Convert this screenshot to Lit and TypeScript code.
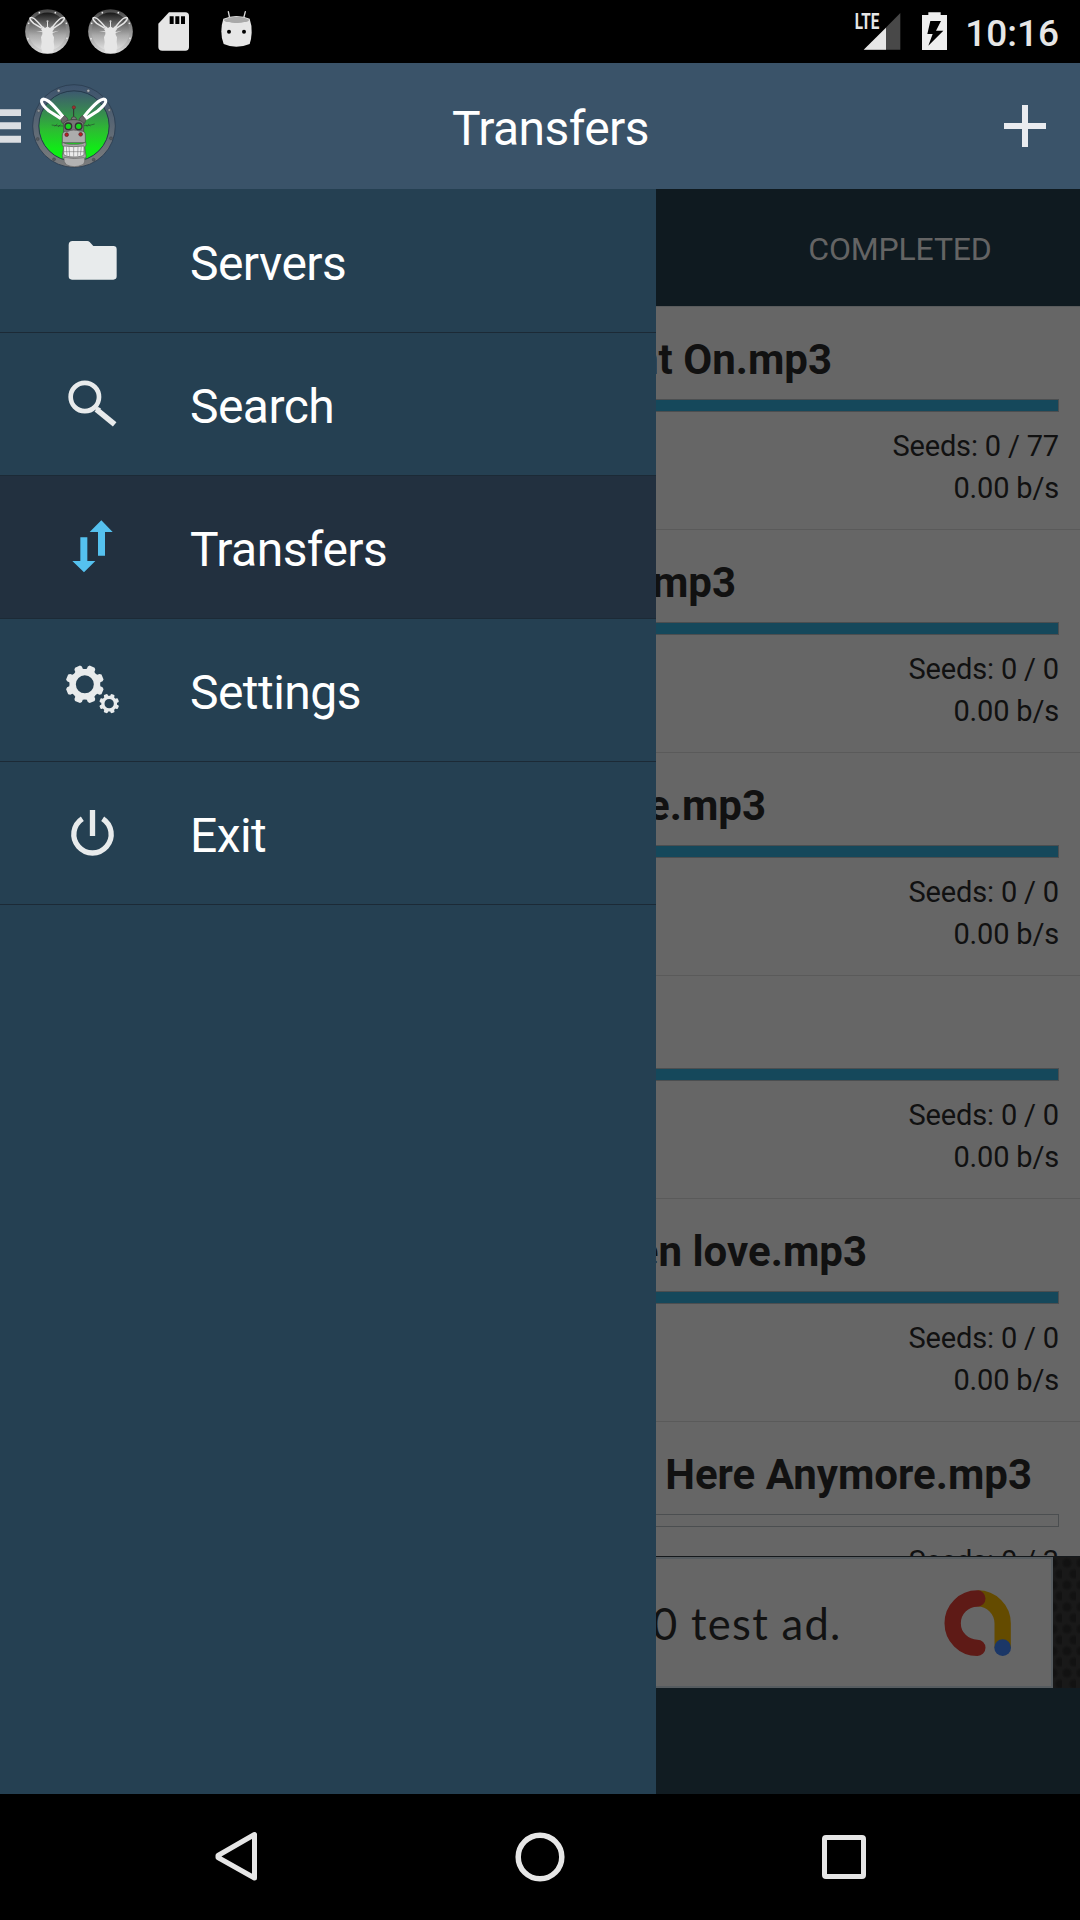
import { LitElement, html, css, svg } from "lit";
import { customElement } from "lit/decorators.js";

interface Transfer {
  title: string;
  inset: number;
  done: boolean;
  seeds: string;
}

const TRANSFERS: Transfer[] = [
  { title: "nt On.mp3", inset: 248, done: true, seeds: "0 / 77" },
  { title: ".mp3", inset: 344, done: true, seeds: "0 / 0" },
  { title: "e.mp3", inset: 314, done: true, seeds: "0 / 0" },
  { title: "", inset: 21, done: true, seeds: "0 / 0" },
  { title: "en love.mp3", inset: 213, done: true, seeds: "0 / 0" },
  { title: "Here Anymore.mp3", inset: 48, done: false, seeds: "0 / 3" },
];

/** Outline of an eight-toothed gear with a round hole (even-odd fill). */
function gear(cx: number, cy: number, outer: number, root: number, hole: number): string {
  const pt = (r: number, deg: number) => {
    const a = (deg * Math.PI) / 180;
    return `${(cx + r * Math.cos(a)).toFixed(1)} ${(cy + r * Math.sin(a)).toFixed(1)}`;
  };
  const parts: string[] = [];
  for (let k = 0; k < 8; k++) {
    const c = 22.5 + k * 45;
    parts.push(
      `${k ? "L" : "M"}${pt(root, c - 15)}L${pt(outer * 0.93, c - 13)}L${pt(outer, c - 8)}` +
        `L${pt(outer, c + 8)}L${pt(outer * 0.93, c + 13)}L${pt(root, c + 15)}` +
        `Q${pt(root * 0.96, c + 22.5)} ${pt(root, c + 30)}`,
    );
  }
  return `${parts.join("")}ZM${cx - hole} ${cy}a${hole} ${hole} 0 1 0 ${hole * 2} 0a${hole} ${hole} 0 1 0 ${-hole * 2} 0Z`;
}

const MENU = [
  {
    label: "Servers",
    box: "150 0 240 426",
    icon: svg`<path fill="#e8ebec" d="M218 153H262Q266 153 269 156L280 168H340Q350 168 350 178V259Q350 269 340 269H216Q206 269 206 259V165Q206 153 218 153Z"/>`,
  },
  {
    label: "Search",
    box: "150 429 240 426",
    icon: svg`<g fill="none" stroke="#e8ebec"><circle cx="254.500" cy="621" r="42.500" stroke-width="14"/><path stroke-width="17" d="M289 658L344 703"/></g><path fill="#e8ebec" d="M284 655L293 651L303 655L292 668Z"/>`,
  },
  {
    label: "Transfers",
    box: "150 18 240 426",
    icon: svg`<path fill="#55c1ef" d="M304 151L338 186H315V257H294V186H269ZM241 202H262V273H286L252 307L217 273H241Z"/>`,
  },
  {
    label: "Settings",
    box: "150 447 240 426",
    icon: svg`<path fill="#e8ebec" fill-rule="evenodd" d=${gear(254.5, 643, 58, 47, 27) + gear(327.5, 701, 30, 24, 14)}/>`,
  },
  {
    label: "Exit",
    box: "150 876 240 426",
    icon: svg`<g fill="none" stroke="#e8ebec" stroke-width="16"><path d="M247 1046A56 56 0 1 0 308 1046"/><path d="M277.500 1020V1098"/></g>`,
  },
];

const BOLTS = [[176, 272], [265, 272], [116, 332], [328, 330], [113, 417], [333, 415], [162, 478], [281, 479]];

const donkey = html`<svg class="logo" viewBox="96 252 252 252">
  <defs>
    <linearGradient id="rim" x1="0" y1="0" x2="0" y2="1"><stop offset="0" stop-color="#3c536c"/><stop offset=".3" stop-color="#4d5e70"/><stop offset="1" stop-color="#7d7d7d"/></linearGradient>
    <linearGradient id="glow" x1="0" y1="0" x2="0" y2="1"><stop offset="0" stop-color="#3d5870"/><stop offset=".28" stop-color="#388553"/><stop offset=".55" stop-color="#2dbb32"/><stop offset=".82" stop-color="#12e918"/><stop offset="1" stop-color="#08f40e"/></linearGradient>
  </defs>
  <circle cx="222" cy="378" r="124" fill="url(#rim)" stroke="#2a3c4f" stroke-width="2.500"/>
  <circle cx="222" cy="378" r="105.500" fill="url(#glow)" stroke="#24394a" stroke-width="3"/>
  ${BOLTS.map(([x, y]) => svg`<circle cx=${x} cy=${y} r="4.500" fill=${y < 300 ? "#b5b8bb" : y < 400 ? "#929599" : "#565a5d"} stroke="#3c444c" stroke-width="1.500"/>`)}
  <path d="M183 356L147 333Q121 311 125 301Q130 293 146 304Q162 317 189 350ZM257 356L293 333Q321 309 317 301Q312 293 296 304Q278 318 252 350Z" fill="none" stroke="#fff" stroke-width="9.500" stroke-linejoin="round"/>
  <path d="M182 359L194 346L204 357L197 370H187ZM258 359L247 346L237 357L244 370H254Z" fill="#666" stroke="#444" stroke-width="2"/>
  <path d="M221 350V324" stroke="#303030" stroke-width="3"/>
  <circle cx="221.500" cy="322" r="5" fill="#9c3030" stroke="#5b2424" stroke-width="1.500"/>
  <path d="M213 359Q214 350 221.500 350Q229 350 230 359Z" fill="#777" stroke="#333" stroke-width="2"/>
  <path d="M155 375Q170 378 190 378M164 379L172 372M174 381L181 374M284 372Q268 378 252 377M271 378L264 372M262 380L258 374" fill="none" stroke="#284b30" stroke-width="2"/>
  <path d="M191 370Q198 359 221 359Q245 359 251 370V398H191Z" fill="#777" stroke="#444" stroke-width="2"/>
  <circle cx="205" cy="379" r="10" fill="#18d51e" stroke="#333" stroke-width="4"/>
  <circle cx="236" cy="379" r="10" fill="#18d51e" stroke="#333" stroke-width="4"/>
  <path d="M187 405Q188 392 204 394Q212 390 221 390Q231 390 239 393Q256 391 256 405V428H187Z" fill="#acacac" stroke="#4c4c4c" stroke-width="2"/>
  <circle cx="200" cy="404" r="5.500" fill="#b81f24" stroke="#4d2b2b" stroke-width="2"/>
  <circle cx="242" cy="403" r="5.500" fill="#b81f24" stroke="#4d2b2b" stroke-width="2"/>
  <path d="M187 426Q194 433 221 433Q249 433 257 426Q261 436 254 442L258 466Q260 476 248 479H197Q186 478 187 466L191 442Q184 434 187 426Z" fill="#a8a8a8" stroke="#555" stroke-width="2"/>
  <path d="M191 438Q221 442 252 438V464Q246 471 221 471Q198 471 191 463Z" fill="#ececec" stroke="#555" stroke-width="2"/>
  <path d="M192 455H252M199 440L201 467M207 440L209 469M221 441V470M234 440L233 469M244 440L241 467" fill="none" stroke="#666" stroke-width="1.500"/>
  <path d="M192 472Q222 479 253 473Q257 487 248 494Q222 506 199 494Q190 487 192 472Z" fill="#b2b2b2" stroke="#666" stroke-width="2"/>
</svg>`;

const donkeyBadge = html`<svg class="slot" viewBox="48 0 189 189">
  <defs>
    <linearGradient id="mono" x1="0" y1="0" x2="0" y2="1"><stop offset="0" stop-color="#161616"/><stop offset=".3" stop-color="#686868"/><stop offset=".6" stop-color="#aaa"/><stop offset="1" stop-color="#e2e2e2"/></linearGradient>
    <linearGradient id="monorim" x1="0" y1="0" x2="0" y2="1"><stop offset="0" stop-color="#454545"/><stop offset=".4" stop-color="#858585"/><stop offset="1" stop-color="#ddd"/></linearGradient>
  </defs>
  <circle cx="142.500" cy="94.500" r="67" fill="url(#monorim)"/>
  <circle cx="142.500" cy="94.500" r="57" fill="url(#mono)"/>
  <g fill="#eee"><circle cx="118" cy="38" r="2.500"/><circle cx="166" cy="38" r="2.500"/><circle cx="86" cy="70" r="2.500"/><circle cx="199" cy="70" r="2.500"/><circle cx="84" cy="116" r="2.500"/><circle cx="201" cy="115" r="2.500"/></g>
  <path d="M122 83L101 70Q88 58 90 54Q94 50 104 57Q114 66 126 80ZM163 83L182 70Q195 58 193 54Q189 50 179 57Q169 66 158 80Z" fill="none" stroke="#e6e6e6" stroke-width="4.500"/>
  <path d="M123 87L129 79L135 84L141 80V66H144V80L150 84L156 79L163 86L158 93V104L162 112L161 126L163 140L159 157Q142 163 127 157L123 141L125 127L123 112L127 103V94ZM108 93L127 94V97ZM158 96L177 92L158 99Z" fill="#e6e6e6"/>
  <circle cx="142.500" cy="64" r="3" fill="#ccc"/>
</svg>`;

@customElement("status-bar")
class StatusBar extends LitElement {
  static styles = css`
    :host { display: flex; height: 63px; background: #000; padding-left: 16px; box-sizing: border-box; color: #e6e6e6; font-family: Roboto, sans-serif; }
    .slot { width: 63px; height: 63px; flex: none; display: block; }
    .gap { flex: 1; }
    .signal { width: 60px; height: 63px; display: block; margin-right: 5px; }
    .battery { width: 39px; height: 63px; display: block; }
    .lte { font-family: Roboto, sans-serif; font-weight: 700; font-size: 66px; }
    .clock { width: 105px; padding: 2px 21px 0 0; font-size: 37px; line-height: 63px; font-weight: 500; white-space: nowrap; text-align: right; }
  `;
  render() {
    return html`
      ${donkeyBadge}${donkeyBadge}
      <svg class="slot" viewBox="426 0 189 189">
        <path fill="#e6e6e6" d="M507 37H556Q567 37 567 48V141Q567 152 556 152H487Q475 152 475 141V71Z"/>
        <path fill="#000" d="M509 49H521V72H509ZM526 49H538V72H526ZM543 49H555V72H543Z"/>
      </svg>
      <svg class="slot" viewBox="615 0 189 189">
        <path stroke="#d9d9d9" stroke-width="4" stroke-linecap="round" d="M685 35L689 54M736 35L731 54"/>
        <path fill="#e6e6e6" d="M670 56Q690 48 709 48Q732 48 749 56Q756 76 755 98Q754 119 749 132Q731 140 709 140Q688 140 671 132Q664 116 664 94Q664 74 670 56Z"/>
        <path fill="#a9a9a9" d="M671 59Q688 50 709 50Q732 50 748 59Q745 66 733 66Q722 70 709 69Q696 70 688 66Q674 67 671 59Z"/>
        <circle cx="687" cy="95" r="6" fill="#000"/><circle cx="732" cy="95" r="6" fill="#000"/>
      </svg>
      <div class="gap"></div>
      <svg class="signal" viewBox="90 0 180 189">
        <path fill="#484848" d="M241 39V149H132Z"/>
        <path fill="#e6e6e6" d="M198 83V149H131Z"/>
        <text class="lte" x="104" y="88" textLength="74" lengthAdjust="spacingAndGlyphs" fill="#e6e6e6">LTE</text>
      </svg>
      <svg class="battery" viewBox="285 0 117 189">
        <path fill="#eee" d="M325 37H362V45H381V150H306V45H325Z"/>
        <path fill="#000" d="M331 63H363L348 92H370L325 137L338 102H322Z"/>
      </svg>
      <div class="clock">10:16</div>`;
  }
}

@customElement("app-bar")
class AppBar extends LitElement {
  static styles = css`
    :host { display: flex; align-items: center; height: 126px; background: #3a5369; color: #fff; font-family: Roboto, sans-serif; }
    .menu { width: 21px; height: 36px; display: block; }
    .logo { width: 84px; height: 84px; margin-left: 11px; display: block; }
    .title { flex: 1; text-align: center; font-size: 48px; letter-spacing: -0.6px; line-height: 60px; padding-top: 5px; padding-right: 19px; }
    .add { width: 42px; height: 42px; margin-right: 34px; display: block; }
  `;
  render() {
    return html`
      <svg class="menu" viewBox="0 324 63 108"><path fill="#dbdee2" d="M0 328H63V348H0ZM0 367H63V388H0ZM0 407H63V428H0Z"/></svg>
      ${donkey}
      <div class="title">Transfers</div>
      <svg class="add" viewBox="0 0 42 42"><path fill="#e9ebef" d="M18 0H24V18H42V24H24V42H18V24H0V18H18Z"/></svg>`;
  }
}

@customElement("nav-drawer")
class NavDrawer extends LitElement {
  static styles = css`
    :host { display: block; width: 656px; background: #254052; padding-top: 1px; box-sizing: border-box; font-family: Roboto, sans-serif; color: #fff; }
    .item { display: flex; align-items: center; height: 142px; padding-left: 50px; border-bottom: 1px solid #1c2a36; }
    .selected { background: #22303f; }
    .icon { width: 80px; height: 142px; display: block; }
    .label { margin-left: 60px; font-size: 48px; letter-spacing: -0.55px; line-height: 60px; padding-top: 6px; }
  `;
  render() {
    return MENU.map(
      (m) => html`<div class="item ${m.label === "Transfers" ? "selected" : ""}">
        <svg class="icon" viewBox=${m.box}>${m.icon}</svg>
        <div class="label">${m.label}</div>
      </div>`,
    );
  }
}

@customElement("transfer-pane")
class TransferPane extends LitElement {
  static styles = css`
    :host { display: flex; flex-direction: column; flex: 1; min-width: 0; overflow: hidden; background: #111c22; color: #111; font-family: Roboto, sans-serif; }
    .tabs { display: flex; justify-content: flex-end; height: 117px; background: #0f1a20; }
    .tab { width: 360px; text-align: center; font-size: 32px; letter-spacing: -0.18px; line-height: 121px; color: #646464; }
    .list { height: 1250px; overflow: hidden; background: #666; border-top: 1px solid #595b5c; box-sizing: border-box; }
    .row { height: 194px; padding: 28px 21px 0 0; border-bottom: 1px solid #5a5a5a; }
    .name { height: 50px; line-height: 50px; font-size: 42px; font-weight: 700; display: flex; justify-content: flex-end; white-space: pre; }
    .bar { height: 11px; margin: 14px 0 13px; border: 1px solid #4b4e50; border-left: 0; }
    .fill { background: #15485b; }
    .stat { font-size: 29px; letter-spacing: -0.17px; line-height: 42px; text-align: right; }
    .ad { display: flex; height: 131px; border-top: 1px solid #15191c; background: radial-gradient(circle at 5px 6px, #121212 3px, transparent 6px) 0 0 / 14px 22px, radial-gradient(circle at 12px 17px, #121212 3px, transparent 6px) 0 0 / 14px 22px, #191919; }
    .card { display: flex; align-items: center; width: 397px; box-sizing: border-box; background: #666; border: 2px solid #565c60; border-left: 0; }
    .copy { font-family: Lato, sans-serif; font-size: 43.5px; letter-spacing: 1.3px; line-height: 50px; color: #121212; flex: 1; white-space: nowrap; margin-left: -4px; }
    .admob { width: 68px; height: 68px; margin-right: 39px; flex: none; }
  `;
  render() {
    return html`
      <div class="tabs"><div class="tab">COMPLETED</div></div>
      <div class="list">
        ${TRANSFERS.map(
          (t) => html`<div class="row">
            <div class="name" style="padding-right:${t.inset - 21}px">${t.title}</div>
            <div class="bar ${t.done ? "fill" : ""}"></div>
            <div class="stat">Seeds: ${t.seeds}</div>
            <div class="stat">0.00 b/s</div>
          </div>`,
        )}
      </div>
      <div class="ad">
        <div class="card">
          <div class="copy">0 test ad.</div>
          <svg class="admob" viewBox="913 566 204 204">
            <path d="M1014 594A75 75 0 0 1 1089 669V742" fill="none" stroke="#644b00" stroke-width="49"/>
            <path d="M1013 594.500A74 74 0 0 0 1013 742.500" fill="none" stroke="#5e1a16" stroke-width="49" stroke-linecap="round"/>
            <circle cx="1089" cy="742" r="25" fill="#1b3767"/>
          </svg>
        </div>
      </div>`;
  }
}

@customElement("app-root")
class AppRoot extends LitElement {
  static styles = css`
    :host { display: flex; flex-direction: column; width: 1080px; height: 1920px; overflow: hidden; background: #000; }
    .body { display: flex; height: 1605px; }
    .nav { display: flex; justify-content: center; align-items: center; height: 126px; gap: 244px; }
    .key { width: 60px; height: 60px; display: block; }
  `;
  render() {
    return html`
      <status-bar></status-bar>
      <app-bar></app-bar>
      <div class="body"><nav-drawer></nav-drawer><transfer-pane></transfer-pane></div>
      <div class="nav">
        <svg class="key" viewBox="206 1827 60 60"><path fill="none" stroke="#e6e6e6" stroke-width="5" stroke-linejoin="round" d="M254.500 1834.500V1878L218 1857.500V1855.500Z"/></svg>
        <svg class="key" viewBox="510 1827 60 60"><circle cx="540" cy="1857" r="21.800" fill="none" stroke="#e6e6e6" stroke-width="5.500"/></svg>
        <svg class="key" viewBox="814 1827 60 60"><rect x="824.500" y="1837.500" width="39" height="39" rx="1.500" fill="none" stroke="#e6e6e6" stroke-width="5"/></svg>
      </div>`;
  }
}
